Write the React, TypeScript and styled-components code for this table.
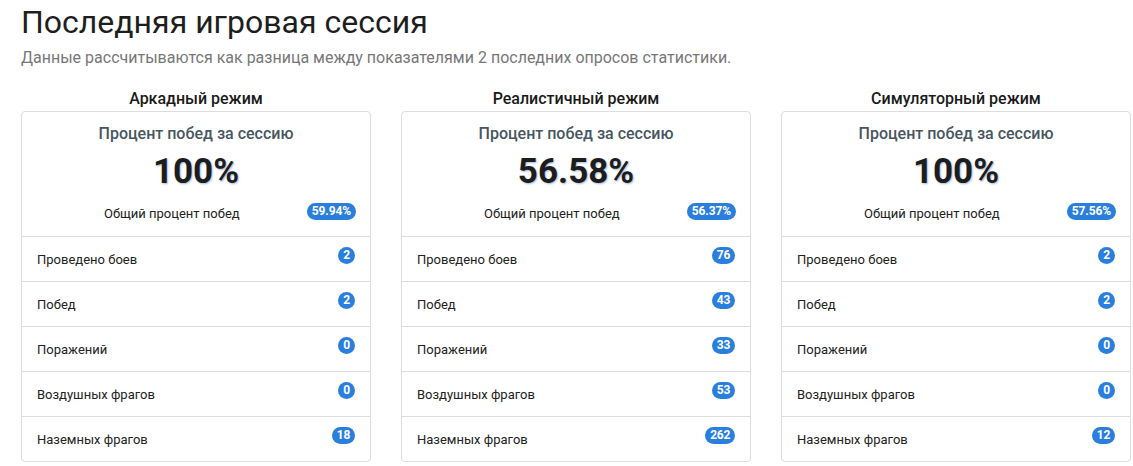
import React from "react";
import styled, { createGlobalStyle } from "styled-components";

const Global = createGlobalStyle`
  html, body { margin: 0; padding: 0; background: #fff; }
  body { font-family: Roboto, "Noto Sans", Arial, sans-serif; color: #222; }
`;

const Page = styled.div`
  padding: 3px 0 0 21px;
  width: 1110px;
`;

const Heading = styled.h1`
  margin: 0;
  font-size: 32px;
  font-weight: 400;
  line-height: 38px;
  color: #1e1e1e;
`;

const Subtitle = styled.p`
  margin: 6px 0 0;
  font-size: 16px;
  line-height: 22px;
  color: #777;
`;

const Columns = styled.div`
  display: grid;
  grid-template-columns: repeat(3, 350px);
  column-gap: 30px;
  margin-top: 19px;
`;

const Column = styled.div`
  display: flex;
  flex-direction: column;
`;

const ModeTitle = styled.div`
  font-size: 16px;
  font-weight: 500;
  line-height: 22px;
  text-align: center;
  color: #1a1a1a;
  margin-bottom: 1px;
`;

const Card = styled.div`
  border: 1px solid #ddd;
  border-radius: 4px;
  background: #fff;
`;

const CardHead = styled.div`
  padding: 10px 15px 12px;
  display: flex;
  flex-direction: column;
  align-items: stretch;
`;

const HeadTitle = styled.div`
  font-size: 16px;
  font-weight: 500;
  line-height: 24px;
  text-align: center;
  color: #47565f;
`;

const BigValue = styled.div`
  margin-top: 5px;
  font-size: 35px;
  font-weight: 700;
  line-height: 42px;
  text-align: center;
  color: #1d1d1d;
  text-shadow: 1px 1px 2px rgba(90, 130, 180, 0.55);
`;

const TotalRow = styled.div`
  margin-top: 11px;
  display: flex;
  align-items: flex-start;
`;

const TotalLabel = styled.div`
  flex: 1;
  text-align: center;
  font-size: 13px;
  line-height: 20px;
  color: #222;
`;

const Badge = styled.span`
  display: inline-block;
  min-width: 17px;
  box-sizing: border-box;
  padding: 0 5px;
  height: 17px;
  line-height: 17px;
  border-radius: 9px;
  background: #2a7fdd;
  color: #fff;
  font-size: 12px;
  font-weight: 700;
  text-align: center;
  letter-spacing: -0.3px;
`;

const TotalBadge = styled(Badge)`
  margin-top: -1px;
  margin-right: -1px;
  padding: 0 5px;
  letter-spacing: -0.1px;
`;

const Row = styled.div`
  border-top: 1px solid #ddd;
  padding: 10px 15px 0;
  box-sizing: content-box;
  display: flex;
  justify-content: space-between;
  align-items: flex-start;
  height: 34px;
`;

const RowLabel = styled.span`
  padding-top: 3px;
  font-size: 13px;
  line-height: 20px;
  color: #222;
`;

type Mode = {
  name: string;
  session: string;
  total: string;
  stats: string[];
};

const labels = [
  "Проведено боев",
  "Побед",
  "Поражений",
  "Воздушных фрагов",
  "Наземных фрагов",
];

const modes: Mode[] = [
  { name: "Аркадный режим", session: "100%", total: "59.94%", stats: ["2", "2", "0", "0", "18"] },
  { name: "Реалистичный режим", session: "56.58%", total: "56.37%", stats: ["76", "43", "33", "53", "262"] },
  { name: "Симуляторный режим", session: "100%", total: "57.56%", stats: ["2", "2", "0", "0", "12"] },
];

export default function App() {
  return (
    <>
      <Global />
      <Page>
        <Heading>Последняя игровая сессия</Heading>
        <Subtitle>
          Данные рассчитываются как разница между показателями 2 последних опросов статистики.
        </Subtitle>
        <Columns>
          {modes.map((m) => (
            <Column key={m.name}>
              <ModeTitle>{m.name}</ModeTitle>
              <Card>
                <CardHead>
                  <HeadTitle>Процент побед за сессию</HeadTitle>
                  <BigValue>{m.session}</BigValue>
                  <TotalRow>
                    <TotalLabel>Общий процент побед</TotalLabel>
                    <TotalBadge>{m.total}</TotalBadge>
                  </TotalRow>
                </CardHead>
                {labels.map((l, i) => (
                  <Row key={l}>
                    <RowLabel>{l}</RowLabel>
                    <Badge>{m.stats[i]}</Badge>
                  </Row>
                ))}
              </Card>
            </Column>
          ))}
        </Columns>
      </Page>
    </>
  );
}
